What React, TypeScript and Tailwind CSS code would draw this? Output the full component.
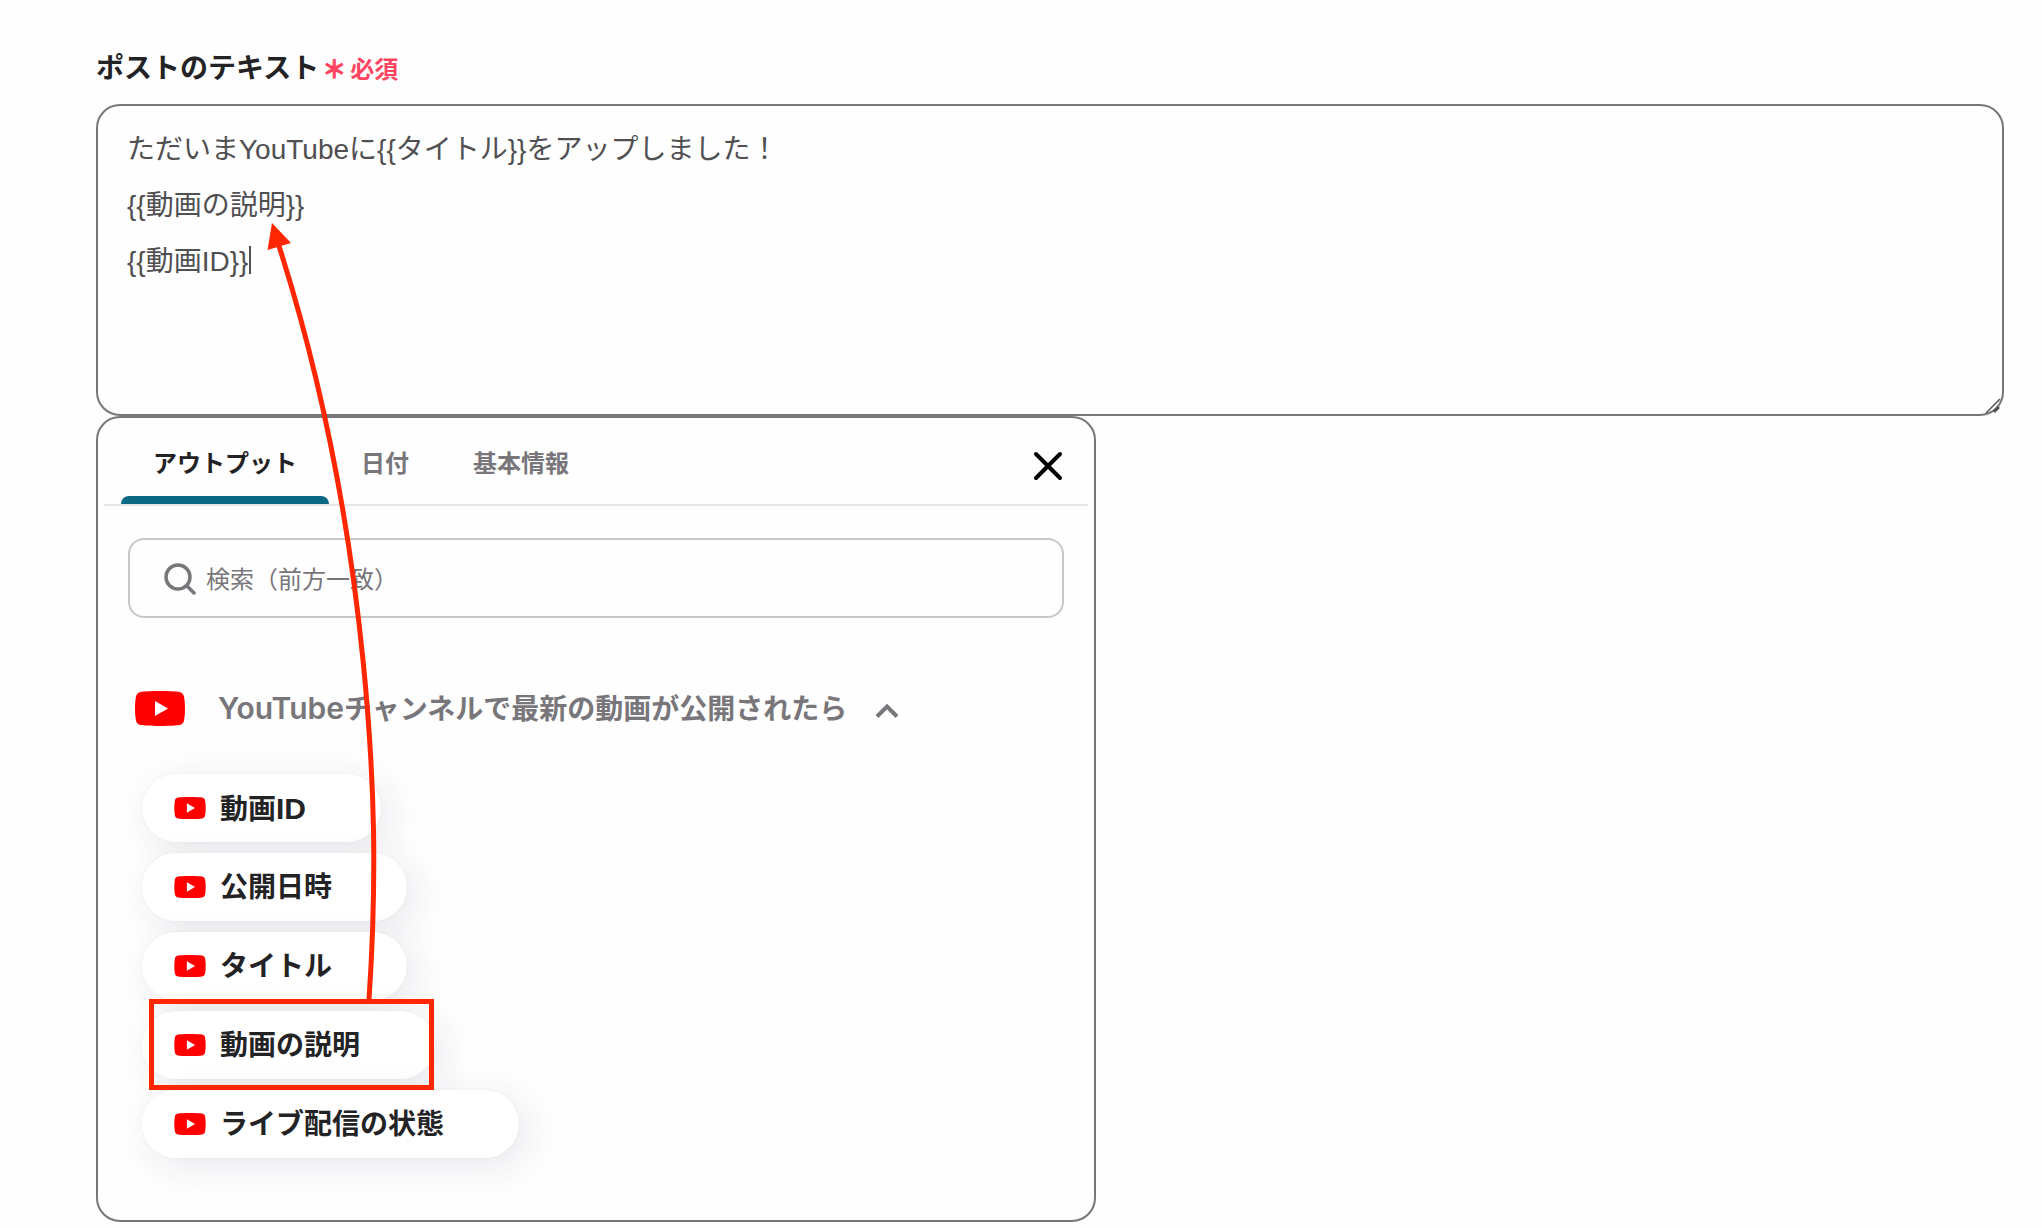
import React from "react";

const POST_TEXT = "ただいまYouTubeに{{タイトル}}をアップしました！\n{{動画の説明}}\n{{動画ID}}";

const TABS = ["アウトプット", "日付", "基本情報"];

const OUTPUTS = [
  { label: "動画", latin: "ID" },
  { label: "公開日時" },
  { label: "タイトル" },
  { label: "動画の説明", highlighted: true },
  { label: "ライブ配信の状態" },
];

function YouTubeIcon({ className }: { className: string }) {
  return (
    <svg viewBox="0 0 50 35" className={className} aria-hidden="true">
      <path
        d="M25 0C35 0 41 .4 44.200 .9C47 1.500 48.500 3 49 5.500C49.700 9 50 13 50 17.500S49.700 26 49 29.500C48.500 32 47 33.500 44.200 34.100C41 34.600 35 35 25 35S9 34.600 5.800 34.100C3 33.500 1.500 32 1 29.500C.3 26 0 22 0 17.500S.3 9 1 5.500C1.500 3 3 1.500 5.800 .9C9 .4 15 0 25 0Z"
        fill="#ff0000"
      />
      <path d="M20 10V25L33 17.500Z" fill="#fff" />
    </svg>
  );
}

function TabBar() {
  return (
    <div className="mx-[6px] flex h-[88px] items-stretch justify-between border-b-2 border-[#e6e5e7] pl-[17px] pr-[20px]">
      <div role="tablist" className="flex">
        {TABS.map((tab, i) => (
          <button
            key={tab}
            type="button"
            role="tab"
            aria-selected={i === 0}
            className={
              i === 0
                ? "flex flex-col items-center justify-between text-[24px] font-bold text-[#232225]"
                : "flex flex-col items-center justify-between text-[24px] font-bold text-[#78767a]"
            }
          >
            <span className="px-8 pt-7 leading-9">{tab}</span>
            {i === 0 && <span className="h-2 w-full rounded-t-lg bg-[#0a6882]" />}
          </button>
        ))}
      </div>
      <button type="button" aria-label="閉じる" className="flex items-center pt-[10px]">
        <svg viewBox="0 0 40 40" className="size-10" fill="none" stroke="#000" strokeWidth="4" strokeLinecap="round">
          <path d="M8 8L32 32M32 8L8 32" />
        </svg>
      </button>
    </div>
  );
}

function SearchBox() {
  return (
    <label className="mx-[30px] mt-8 flex h-20 items-center gap-[10px] rounded-2xl border-2 border-[#c8c7c9] px-[34px] pt-[2px]">
      <svg viewBox="0 0 32 32" className="size-8 shrink-0" fill="none" stroke="#78767a" strokeWidth="3.500" strokeLinecap="round">
        <circle cx="14" cy="14" r="12" />
        <path d="M23 23L30 30" />
      </svg>
      <input
        type="text"
        aria-label="検索"
        placeholder="検索（前方一致）"
        className="h-12 min-w-0 flex-1 bg-transparent pt-[2px] text-[24px] outline-none placeholder:text-[#78767a]"
      />
    </label>
  );
}

function OutputPill({ label, latin, highlighted }: { label: string; latin?: string; highlighted?: boolean }) {
  return (
    <li className="relative flex">
      <button
        type="button"
        className="flex h-[68px] items-center gap-[14px] rounded-full bg-white pl-8 pr-[75px] text-[28px] font-bold text-[#232225] shadow-[8px_8px_36px_rgba(70,50,90,0.11),0_0_3px_rgba(70,60,80,0.06)]"
      >
        <YouTubeIcon className="h-[22px] w-8" />
        <span className="pt-[2px] leading-10">
          {label}
          {latin && <span className="text-[30px]">{latin}</span>}
        </span>
      </button>
      {highlighted && (
        <span className="pointer-events-none absolute left-[7px] top-[-12px] z-10 h-[91px] w-[285px] border-[5px] border-[#ff2600]" />
      )}
    </li>
  );
}

function VariablePicker() {
  return (
    <section className="w-full max-w-[1000px] rounded-3xl border-2 border-[#78767a] pb-[62px]">
      <TabBar />
      <SearchBox />
      <button
        type="button"
        aria-expanded="true"
        className="ml-[37px] mt-[60px] flex h-[60px] items-center text-[28px] font-bold text-[#78767a]"
      >
        <YouTubeIcon className="h-[35px] w-[50px]" />
        <span className="ml-[33px] pt-[2px] leading-10">
          <span className="font-['Inter'] text-[30px] font-semibold">YouTube</span>チャンネルで最新の動画が公開されたら
        </span>
        <svg viewBox="0 0 24 16" className="ml-7 mt-[6px] h-4 w-6" fill="none" stroke="#78767a" strokeWidth="4">
          <path d="M2 13.500L12 3.500L22 13.500" />
        </svg>
      </button>
      <ul className="ml-11 mt-9 flex flex-col gap-[11px]">
        {OUTPUTS.map((o) => (
          <OutputPill key={o.label} label={o.label} latin={o.latin} highlighted={o.highlighted} />
        ))}
      </ul>
    </section>
  );
}

export default function App() {
  return (
    <main className="relative min-h-screen bg-[#fefefe] pl-24 pr-[38px] pt-12 font-['Liberation_Sans','Noto_Sans_CJK_JP',sans-serif]">
      <label htmlFor="post-text" className="mb-4 flex h-10 items-center pt-[2px] font-bold">
        <span className="text-[28px] leading-10 text-[#232225]">ポストのテキスト</span>
        <span className="ml-[3px] flex gap-1 pt-[2px] text-[24px] leading-10 text-[#ff4661]">
          <span className="[-webkit-text-stroke:1px]">＊</span>
          <span>必須</span>
        </span>
      </label>
      <div className="relative">
        <textarea
          id="post-text"
          defaultValue={POST_TEXT}
          className="block h-[312px] w-full resize-none rounded-3xl border-2 border-[#78767a] bg-transparent px-[29px] py-4 text-[28px] leading-[56px] text-[#504f52] outline-none"
        />
        <span className="absolute left-[153px] top-[142px] h-7 w-[2px] bg-[#504f52]" />
        <svg
          viewBox="0 0 16 16"
          className="pointer-events-none absolute bottom-[2px] right-[3px] size-4"
          fill="none"
          stroke="#504f52"
          aria-hidden="true"
        >
          <path d="M1 15L15 1" strokeWidth="1.500" />
          <path d="M9 14L14 9" strokeWidth="2.500" />
        </svg>
      </div>
      <VariablePicker />
      <svg
        viewBox="0 0 120 780"
        className="pointer-events-none absolute left-[264px] top-[222px] z-20 h-[780px] w-[120px]"
        aria-hidden="true"
      >
        <path
          d="M105 778C113 658 111 558 99 438C86 308 61 168 15 24"
          fill="none"
          stroke="#ff2600"
          strokeWidth="5"
        />
        <path d="M8 1L3.500 28L27 21Z" fill="#ff2600" />
      </svg>
    </main>
  );
}
